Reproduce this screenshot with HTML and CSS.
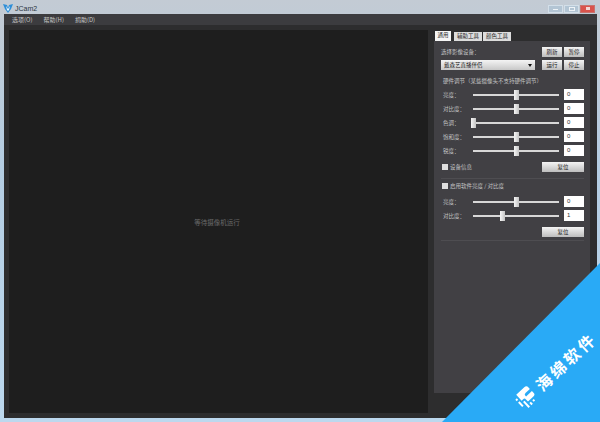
FILE: index.html
```html
<!DOCTYPE html>
<html lang="zh-CN">
<head>
  <meta charset="UTF-8" />
  <title>JCam2</title>
  <link rel="stylesheet" href="styles.css">
</head>
<body>
  <div class="window">
    <div class="titlebar">
      <svg class="app-icon" width="10" height="10" viewBox="0 0 10 10">
        <path d="M0 1 L4 2 L5 5 L6 2 L10 1 L8 6 L5 10 L2 6 Z" fill="#2f8fd8" />
        <path d="M3 3 L5 6 L7 3 L6 7 L5 8 L4 7 Z" fill="#e8f6ff" />
      </svg>
      <span class="app-title">JCam2</span>
      <div class="win-btns">
        <span class="win-btn"><i class="min-mark"></i></span>
        <span class="win-btn"><i class="max-mark"></i></span>
        <span class="win-btn close"><i class="close-mark"></i></span>
      </div>
    </div>

    <div class="client">
      <div class="menubar">
        <span>选项(O)</span>
        <span>帮助(H)</span>
        <span>捐助(D)</span>
      </div>

      <div class="main">
        <div class="video">等待摄像机运行</div>

        <div class="side">
          <div class="tabs">
            <span class="tab active">通用</span>
            <span class="tab">辅助工具</span>
            <span class="tab">颜色工具</span>
          </div>

          <div class="panel">
            <div class="device-row first">
              <span class="device-label">选择影像设备：</span>
              <button class="btn">刷新</button>
              <button class="btn">暂停</button>
            </div>
            <div class="device-row">
              <div class="select">戴森艺直播伴侣<i class="caret"></i></div>
              <button class="btn">运行</button>
              <button class="btn">停止</button>
            </div>

            <div class="hw-title">硬件调节（某些摄像头不支持硬件调节）</div>

            <div class="slider-row">
              <label>亮度：</label>
              <div class="slider"><i class="thumb mid"></i></div>
              <div class="num">0</div>
            </div>
            <div class="slider-row">
              <label>对比度：</label>
              <div class="slider"><i class="thumb mid"></i></div>
              <div class="num">0</div>
            </div>
            <div class="slider-row">
              <label>色调：</label>
              <div class="slider"><i class="thumb start"></i></div>
              <div class="num">0</div>
            </div>
            <div class="slider-row">
              <label>饱和度：</label>
              <div class="slider"><i class="thumb mid"></i></div>
              <div class="num">0</div>
            </div>
            <div class="slider-row">
              <label>锐度：</label>
              <div class="slider"><i class="thumb mid"></i></div>
              <div class="num">0</div>
            </div>

            <div class="check-row">
              <span class="check"><i class="box"></i>设备信息</span>
              <button class="btn wide">复位</button>
            </div>

            <div class="section">
              <span class="check"><i class="box"></i>启用软件亮度 / 对比度</span>
            </div>

            <div class="slider-row">
              <label>亮度：</label>
              <div class="slider"><i class="thumb mid"></i></div>
              <div class="num">0</div>
            </div>
            <div class="slider-row">
              <label>对比度：</label>
              <div class="slider"><i class="thumb third"></i></div>
              <div class="num">1</div>
            </div>

            <div class="reset-row">
              <button class="btn wide">复位</button>
            </div>
          </div>
        </div>
      </div>
    </div>
  </div>

  <!-- watermark corner -->
  <div class="corner"></div>
  <div class="mark">
    <svg width="20" height="20" viewBox="0 0 20 20">
      <path d="M5 1 H16 Q19 1 19 4 V6 H13 Q11 6 11 8 V9 H19 V12 Q19 14 16 14 H9 V11 Q9 9 7 9 H5 Z" fill="#fff" />
      <path d="M1 4 H3 V6 H1 Z M1 8 H3 V14 H1 Z M5 11 H7 V19 H5 Z M9 16 H11 V19 H9 Z M13 16 H15 V18 H13 Z" fill="#fff" />
    </svg>
    <span class="mark-text">海绵软件</span>
  </div>
</body>
</html>
```

FILE: styles.css
```css
html, body {
  margin: 0;
  height: 100%;
  overflow: hidden;
}
body {
  font-family: "Noto Sans CJK SC", "Liberation Sans", sans-serif;
  background: #b9d2e6;
}
.window {
  width: 600px;
  height: 422px;
  box-sizing: border-box;
  padding: 0 3px 4px 4px;
  display: flex;
  flex-direction: column;
  background: linear-gradient(#c3cbd4, #b4cde2 40%, #bcd8ee);
}

/* title bar */
.titlebar {
  height: 14px;
  flex: none;
  display: flex;
  align-items: center;
  margin-left: -1px;
}
.app-icon {
  margin: 1px 2px 0 0;
}
.app-title {
  font: 7px "Liberation Sans", sans-serif;
  color: #2b3642;
  margin-top: 3px;
}
.win-btns {
  margin-left: auto;
  margin-right: 2px;
  margin-top: 3px;
  display: flex;
  gap: 1px;
}
.win-btn {
  width: 13px;
  height: 6px;
  background: #b3c5d4;
  border: 1px solid #d3dfe9;
  display: flex;
  align-items: center;
  justify-content: center;
}
.win-btn.close {
  background: #d9534c;
  border-color: #c9736e;
}
.min-mark {
  width: 5px;
  height: 1px;
  margin-top: 2px;
  background: #eef3f7;
}
.max-mark {
  width: 4px;
  height: 2px;
  border: 1px solid #eef3f7;
}
.close-mark {
  width: 4px;
  height: 3px;
  background: #f4d6d2;
}

/* client area */
.client {
  flex: 1;
  display: flex;
  flex-direction: column;
  background: #2d2d2e;
  min-height: 0;
}
.menubar {
  height: 11px;
  flex: none;
  display: flex;
  gap: 11px;
  align-items: center;
  padding-left: 8px;
  background: #3c3c3f;
  font-size: 6px;
  color: #c4c4c4;
}
.main {
  flex: 1;
  display: flex;
  min-height: 0;
  padding: 5px 6px 5px 5px;
  gap: 5px;
}
.video {
  width: 419px;
  flex: none;
  box-sizing: border-box;
  padding-right: 3px;
  background: #1e1e1e;
  display: flex;
  align-items: center;
  justify-content: center;
  font-size: 6.5px;
  color: #6b6b6b;
}

/* side */
.side {
  flex: 1;
  display: flex;
  flex-direction: column;
}
.tabs {
  height: 10px;
  padding-left: 2px;
  display: flex;
  gap: 1px;
  align-items: flex-end;
  margin-top: 1px;
}
.tab {
  height: 9px;
  padding: 0 3px;
  background: #dcdcdc;
  color: #222;
  font-size: 5.5px;
  line-height: 9px;
}
.tab.active {
  height: 10px;
  background: #f5f5f5;
  padding: 0 2.5px;
  margin-right: 2px;
}
.panel {
  width: 156px;
  height: 352px;
  margin-left: 1px;
  box-sizing: border-box;
  padding: 6px 6px 0 7px;
  background: #414044;
  font-size: 5.5px;
  color: #c4c4c4;
}
.device-row {
  display: flex;
  gap: 2px;
  align-items: center;
  height: 10px;
}
.device-row.first {
  margin-bottom: 3px;
}
.device-label {
  flex: 1;
}
.btn {
  width: 20px;
  height: 10px;
  margin: 0;
  padding: 0;
  border: 0;
  font-family: inherit;
  font-size: 5.5px;
  line-height: 10px;
  color: #222;
  background: linear-gradient(#f4f4f4, #bdbdbd);
}
.btn.wide {
  width: 42px;
}
.select {
  width: 94px;
  height: 10px;
  margin-right: 5px;
  box-sizing: border-box;
  padding-left: 3px;
  display: flex;
  align-items: center;
  justify-content: space-between;
  line-height: 10px;
  color: #222;
  background: linear-gradient(#f4f4f4, #c8c8c8);
}
.caret {
  margin-right: 3px;
  border-left: 2px solid transparent;
  border-right: 2px solid transparent;
  border-top: 3px solid #111;
}
.hw-title {
  height: 8px;
  line-height: 8px;
  margin: 7px 0 4px 2px;
}
.slider-row {
  height: 11px;
  margin-bottom: 3px;
  display: flex;
  align-items: center;
}
.slider-row label {
  width: 32px;
  padding-left: 2px;
  box-sizing: border-box;
}
.slider {
  width: 86px;
  height: 2px;
  position: relative;
  background: #d8d8d8;
}
.thumb {
  position: absolute;
  top: -4px;
  width: 5px;
  height: 10px;
  background: linear-gradient(90deg, #f6f6f6, #c4c4c4);
}
.thumb.mid { left: 41px; }
.thumb.start { left: -2px; }
.thumb.third { left: 27px; }
.num {
  width: 20px;
  height: 11px;
  margin-left: 5px;
  box-sizing: border-box;
  padding-left: 3px;
  background: #fff;
  color: #333;
  font: 6px/11px "Liberation Sans", sans-serif;
}
.check-row {
  height: 10px;
  display: flex;
  align-items: center;
  justify-content: space-between;
  margin-top: 6px;
  padding-bottom: 6px;
  border-bottom: 1px solid #4e4d51;
}
.check {
  display: flex;
  align-items: center;
  gap: 2px;
  padding-left: 1px;
}
.box {
  width: 6px;
  height: 6px;
  background: #dedede;
}
.section {
  height: 8px;
  line-height: 8px;
  margin: 3px 0 6px;
  display: flex;
}
.reset-row {
  display: flex;
  justify-content: flex-end;
  height: 10px;
  margin-top: 6px;
  padding-bottom: 3px;
  border-bottom: 1px solid #4e4d51;
}

/* watermark over the corner */
.corner {
  position: absolute;
  right: 0;
  bottom: 0;
  width: 158px;
  height: 159px;
  background: #29aaf6;
  clip-path: polygon(100% 0, 100% 100%, 0 100%);
}
.mark {
  position: absolute;
  left: 505px;
  top: 360px;
  width: 102px;
  height: 20px;
  display: flex;
  align-items: center;
  gap: 6px;
  transform: rotate(-43deg);
  color: #fff;
  white-space: nowrap;
}
.mark svg {
  flex: none;
}
.mark-text {
  font-size: 16px;
  font-weight: 700;
  line-height: 20px;
  letter-spacing: 3px;
}
```
